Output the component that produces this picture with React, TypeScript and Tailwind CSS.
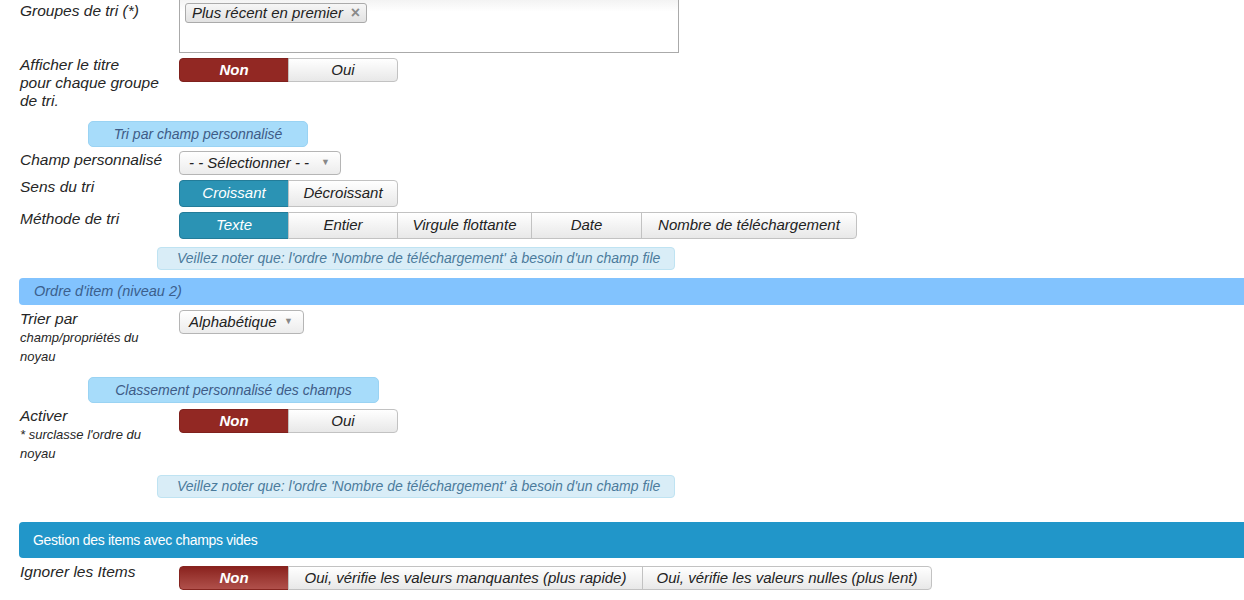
import React from 'react';

type Btn = { label: string; w: number };

function Segmented({ items, active, tone, h, gradient }: { items: Btn[]; active: number; tone: 'red' | 'teal'; h: string; gradient?: boolean }) {
  return (
    <div className={`flex ${h}`}>
      {items.map((it, i) => {
        const isActive = i === active;
        const first = i === 0;
        const last = i === items.length - 1;
        let cls = 'flex items-center justify-center border text-[15px] italic ';
        if (first) cls += 'rounded-l-[4px] ';
        if (last) cls += 'rounded-r-[4px] ';
        if (!first) cls += '-ml-px ';
        if (isActive) {
          if (tone === 'red') {
            cls += gradient
              ? 'bg-gradient-to-b from-[#8a221e] to-[#b0504b] border-[#862520] text-white font-bold '
              : 'bg-[#922823] border-[#7f211d] text-white font-bold ';
          } else {
            cls += 'bg-[#2b93b4] border-[#237c99] text-white ';
          }
        } else {
          cls += 'bg-gradient-to-b from-white to-[#e8e8e8] border-[#c2c2c2] text-[#222] ';
        }
        return (
          <div key={it.label} className={cls} style={{ width: it.w }}>
            {it.label}
          </div>
        );
      })}
    </div>
  );
}

function Select({ text, w }: { text: string; w: string }) {
  return (
    <div className={`${w} h-[24px] flex items-center justify-between pl-[9px] pr-[10px] border border-[#b5b5b5] rounded-[4px] bg-gradient-to-b from-white to-[#ececec] text-[15px] italic text-[#222]`}>
      <span>{text}</span>
      <span className="text-[9px] text-[#888] not-italic">▼</span>
    </div>
  );
}

function Pill({ text, w }: { text: string; w: string }) {
  return (
    <div className={`ml-[88px] ${w} h-[26px] flex items-center justify-center rounded-[5px] bg-[#a7dcfa] border border-[#9ad3f3] text-[14px] italic text-[#3e5b86]`}>
      {text}
    </div>
  );
}

function Note() {
  return (
    <div className="ml-[157px] w-[518px] h-[23px] flex items-center pl-[19px] rounded-[4px] bg-[#d9edf7] border border-[#bfe3f2] text-[14px] italic text-[#4b7b9c]">
      Veillez noter que: l'ordre 'Nombre de téléchargement' à besoin d'un champ file
    </div>
  );
}

export default function App() {
  return (
    <div
      className="w-[1244px] h-[600px] overflow-hidden bg-white text-[#262626]"
      style={{ fontFamily: '"Liberation Sans", Arial, sans-serif' }}
    >
      {/* Groupes de tri */}
      <div className="flex items-start">
        <div className="w-[179px] pl-[20px] mt-[2px] text-[15.5px] leading-[18px] italic">Groupes de tri (*)</div>
        <div className="-mt-[11px] w-[500px] h-[64px] border border-[#aaa] bg-gradient-to-b from-[#e9e9e9] via-white via-[35%] to-white pt-[13px] pl-[5px]">
          <div className="flex items-center h-[20px] w-[182px] pl-[6px] pr-[6px] justify-between border border-[#aaa] rounded-[3px] bg-gradient-to-b from-[#f6f6f6] to-[#e2e2e2] text-[15px] italic text-[#222]">
            <span>Plus récent en premier</span>
            <span className="not-italic font-bold text-[16px] leading-none text-[#8a8a8a]">×</span>
          </div>
        </div>
      </div>

      {/* Afficher le titre */}
      <div className="flex items-start mt-[3px]">
        <div className="w-[179px] pl-[20px] text-[15.5px] leading-[18px] italic">
          Afficher le titre
          <br />
          pour chaque groupe
          <br />
          de tri.
        </div>
        <div className="mt-[2px]">
          <Segmented h="h-[24px]" tone="red" active={0} items={[{ label: 'Non', w: 110 }, { label: 'Oui', w: 110 }]} />
        </div>
      </div>

      <div className="mt-[11px]">
        <Pill text="Tri par champ personnalisé" w="w-[220px]" />
      </div>

      {/* Champ personnalisé */}
      <div className="flex items-start mt-[4px]">
        <div className="w-[179px] pl-[20px] text-[15.5px] leading-[18px] italic">Champ personnalisé</div>
        <Select text="- - Sélectionner - -" w="w-[162px]" />
      </div>

      {/* Sens du tri */}
      <div className="flex items-start mt-[3px]">
        <div className="w-[179px] pl-[20px] text-[15.5px] leading-[18px] italic">Sens du tri</div>
        <div className="mt-[2px]">
          <Segmented h="h-[27px]" tone="teal" active={0} items={[{ label: 'Croissant', w: 110 }, { label: 'Décroissant', w: 110 }]} />
        </div>
      </div>

      {/* Méthode de tri */}
      <div className="flex items-start mt-[3px]">
        <div className="w-[179px] pl-[20px] text-[15.5px] leading-[18px] italic">Méthode de tri</div>
        <div className="mt-[2px]">
          <Segmented
            h="h-[27px]"
            tone="teal"
            active={0}
            items={[
              { label: 'Texte', w: 110 },
              { label: 'Entier', w: 110 },
              { label: 'Virgule flottante', w: 135 },
              { label: 'Date', w: 111 },
              { label: 'Nombre de téléchargement', w: 216 },
            ]}
          />
        </div>
      </div>

      <div className="mt-[8px]">
        <Note />
      </div>

      {/* Ordre d'item */}
      <div className="mt-[8px] ml-[19px] h-[27px] flex items-center pl-[15px] rounded-l-[4px] bg-[#82c3fe] text-[14.5px] italic text-[#3b5f8d]">
        Ordre d'item (niveau 2)
      </div>

      {/* Trier par */}
      <div className="flex items-start mt-[5px]">
        <div className="w-[179px] pl-[20px] italic">
          <div className="text-[15.5px] leading-[18px]">Trier par</div>
          <div className="text-[13px] leading-[19px]">champ/propriétés du</div>
          <div className="text-[13px] leading-[19px]">noyau</div>
        </div>
        <Select text="Alphabétique" w="w-[125px]" />
      </div>

      <div className="mt-[11px]">
        <Pill text="Classement personnalisé des champs" w="w-[291px]" />
      </div>

      {/* Activer */}
      <div className="flex items-start mt-[4px]">
        <div className="w-[179px] pl-[20px] italic">
          <div className="text-[15.5px] leading-[18px]">Activer</div>
          <div className="text-[13px] leading-[19px]">* surclasse l'ordre du</div>
          <div className="text-[13px] leading-[19px]">noyau</div>
        </div>
        <div className="mt-[2px]">
          <Segmented h="h-[24px]" tone="red" active={0} items={[{ label: 'Non', w: 110 }, { label: 'Oui', w: 110 }]} />
        </div>
      </div>

      <div className="mt-[12px]">
        <Note />
      </div>

      {/* Gestion des items */}
      <div className="mt-[24px] ml-[19px] h-[36px] flex items-center pl-[14px] rounded-l-[4px] bg-[#2196c9] text-[14px] tracking-[-0.3px] text-white">
        Gestion des items avec champs vides
      </div>

      {/* Ignorer les Items */}
      <div className="flex items-start mt-[5px]">
        <div className="w-[179px] pl-[20px] text-[15.5px] leading-[18px] italic">Ignorer les Items</div>
        <div className="mt-[3px]">
          <Segmented
            h="h-[24px]"
            tone="red"
            gradient
            active={0}
            items={[
              { label: 'Non', w: 110 },
              { label: 'Oui, vérifie les valeurs manquantes (plus rapide)', w: 355 },
              { label: 'Oui, vérifie les valeurs nulles (plus lent)', w: 290 },
            ]}
          />
        </div>
      </div>
    </div>
  );
}
